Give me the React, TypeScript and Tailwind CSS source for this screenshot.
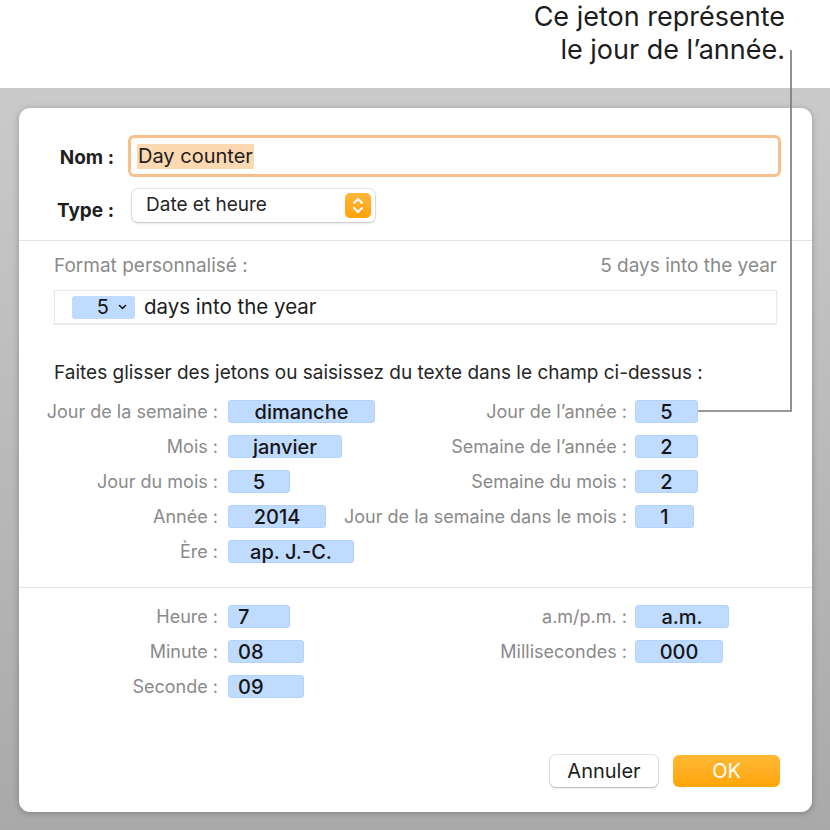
import React from "react";

const font = { fontFamily: "Inter, 'Noto Sans', sans-serif" };

function Token({ children, w, left }: { children: React.ReactNode; w: string; left?: boolean }) {
  return (
    <div
      className={`${w} h-[23px] rounded-[3px] bg-[#bfdbff] border border-[#b4d3fb] flex items-center text-[20px] leading-none font-medium text-[#151515] ${
        left ? "justify-start pl-[9px]" : "justify-center"
      }`}
    >
      {children}
    </div>
  );
}

type Cell = { label: string; value: string; w: string; left?: boolean };

function Row({ a, b }: { a?: Cell; b?: Cell }) {
  return (
    <div className="flex h-[35px] items-center">
      <div className="w-[356px] shrink-0 flex items-center">
        {a && (
          <>
            <div className="w-[199px] shrink-0 flex justify-end text-[18px] text-[#8a8a8a] whitespace-nowrap">{a.label}</div>
            <div className="ml-[10px]">
              <Token w={a.w} left={a.left}>{a.value}</Token>
            </div>
          </>
        )}
      </div>
      {b && (
        <div className="flex items-center">
          <div className="w-[252px] shrink-0 flex justify-end text-[18px] text-[#8a8a8a] whitespace-nowrap">{b.label}</div>
          <div className="ml-[8px]">
            <Token w={b.w} left={b.left}>{b.value}</Token>
          </div>
        </div>
      )}
    </div>
  );
}

export default function App() {
  return (
    <div className="relative w-[830px] h-[830px] overflow-hidden bg-white" style={font}>
      {/* callout */}
      <div className="h-[88px] pr-[45px] text-right text-[27px] leading-[33px] text-[#1c1c1c]">
        <div>Ce jeton représente</div>
        <div>le jour de l’année.</div>
      </div>

      <div className="h-[742px] bg-gradient-to-b from-[#cacaca] to-[#a9a9a9] pt-[20px] pl-[19px]">
        <div className="w-[793px] h-[704px] bg-white rounded-[11px] shadow-[0_1px_6px_rgba(0,0,0,0.25)] flex flex-col">
          {/* name / type */}
          <div className="pt-[27px] pb-[18px]">
            <div className="flex items-center h-[42px]">
              <div className="w-[95px] shrink-0 flex justify-end text-[19px] leading-[23px] font-bold text-[#1e1e1e] pt-[2px]">Nom :</div>
              <div className="ml-[14px] w-[653px] h-[42px] rounded-[6px] border-[3px] border-[#f8c18c] bg-white flex items-center pl-[6px]">
                <span className="bg-[#fdd9b1] text-[20px] leading-[25px] text-[#202020] px-[1px]">Day counter</span>
              </div>
            </div>
            <div className="flex items-center h-[33px] mt-[12px]">
              <div className="w-[95px] shrink-0 flex justify-end text-[19px] leading-[23px] font-bold text-[#1e1e1e] translate-y-[5px]">Type :</div>
              <div className="ml-[18px] w-[243px] h-[33px] rounded-[6px] bg-white shadow-[0_0_0_1px_rgba(0,0,0,0.08),0_1px_3px_rgba(0,0,0,0.18)] flex items-center justify-between pl-[14px] pr-[4px]">
                <span className="text-[19px] text-[#262626]">Date et heure</span>
                <div className="w-[26px] h-[25px] rounded-[5px] bg-gradient-to-b from-[#ffb63a] to-[#ffa300] flex items-center justify-center">
                  <svg width="12" height="17" viewBox="0 0 12 17" fill="none" stroke="white" strokeWidth="2" strokeLinecap="round" strokeLinejoin="round">
                    <path d="M2 6l4-4 4 4" />
                    <path d="M2 11l4 4 4-4" />
                  </svg>
                </div>
              </div>
            </div>
          </div>

          <div className="h-px bg-[#e4e4e4]" />

          {/* format */}
          <div className="pt-[14px] pb-[18px]">
            <div className="px-[35px] flex justify-between h-[22px] items-center text-[19px] text-[#8a8a8a]">
              <span>Format personnalisé :</span>
              <span>5 days into the year</span>
            </div>
            <div className="mx-[35px] mt-[13px] h-[34px] border border-[#e8e8e8] shadow-[0_1px_1px_rgba(0,0,0,0.08)] flex items-center pl-[17px]">
              <div className="w-[63px] h-[23px] rounded-[3px] bg-[#bfdbff] flex items-center justify-end pr-[8px] gap-[9px]">
                <span className="text-[20px] leading-none text-[#151515]">5</span>
                <svg width="9" height="6" viewBox="0 0 9 6" fill="none" stroke="#1a1a1a" strokeWidth="1.6" strokeLinecap="round" strokeLinejoin="round">
                  <path d="M1.5 1.5l3 3 3-3" />
                </svg>
              </div>
              <span className="ml-[9px] text-[20.5px] text-[#1c1c1c]">days into the year</span>
            </div>
            <div className="px-[35px] mt-[38px] h-[22px] flex items-center text-[19px] text-[#262626] whitespace-nowrap">
              Faites glisser des jetons ou saisissez du texte dans le champ ci-dessus :
            </div>
            <div className="mt-[10px]">
              <Row a={{ label: "Jour de la semaine :", value: "dimanche", w: "w-[147px]" }} b={{ label: "Jour de l’année :", value: "5", w: "w-[63px]" }} />
              <Row a={{ label: "Mois :", value: "janvier", w: "w-[114px]" }} b={{ label: "Semaine de l’année :", value: "2", w: "w-[63px]" }} />
              <Row a={{ label: "Jour du mois :", value: "5", w: "w-[62px]" }} b={{ label: "Semaine du mois :", value: "2", w: "w-[63px]" }} />
              <Row a={{ label: "Année :", value: "2014", w: "w-[98px]" }} b={{ label: "Jour de la semaine dans le mois :", value: "1", w: "w-[59px]" }} />
              <Row a={{ label: "Ère :", value: "ap. J.-C.", w: "w-[126px]" }} />
            </div>
          </div>

          <div className="h-px bg-[#e4e4e4]" />

          {/* time */}
          <div className="pt-[11px]">
            <Row a={{ label: "Heure :", value: "7", w: "w-[62px]", left: true }} b={{ label: "a.m/p.m. :", value: "a.m.", w: "w-[94px]" }} />
            <Row a={{ label: "Minute :", value: "08", w: "w-[76px]", left: true }} b={{ label: "Millisecondes :", value: "000", w: "w-[88px]" }} />
            <Row a={{ label: "Seconde :", value: "09", w: "w-[76px]", left: true }} />
          </div>

          <div className="mt-auto pb-[25px] pr-[32px] flex justify-end gap-[15px]">
            <button className="w-[108px] h-[32px] rounded-[6px] bg-white shadow-[0_0_0_1px_rgba(0,0,0,0.1),0_1px_2px_rgba(0,0,0,0.2)] text-[20px] text-[#1e1e1e]">
              Annuler
            </button>
            <button className="w-[107px] h-[32px] rounded-[6px] bg-gradient-to-b from-[#ffb833] to-[#ffa500] text-[20px] text-white">
              OK
            </button>
          </div>
        </div>
      </div>

      {/* leader line */}
      <svg className="absolute left-0 top-0 pointer-events-none" width="830" height="830">
        <path d="M791 50 V411 H698" fill="none" stroke="#777" strokeWidth="1.6" />
      </svg>
    </div>
  );
}
